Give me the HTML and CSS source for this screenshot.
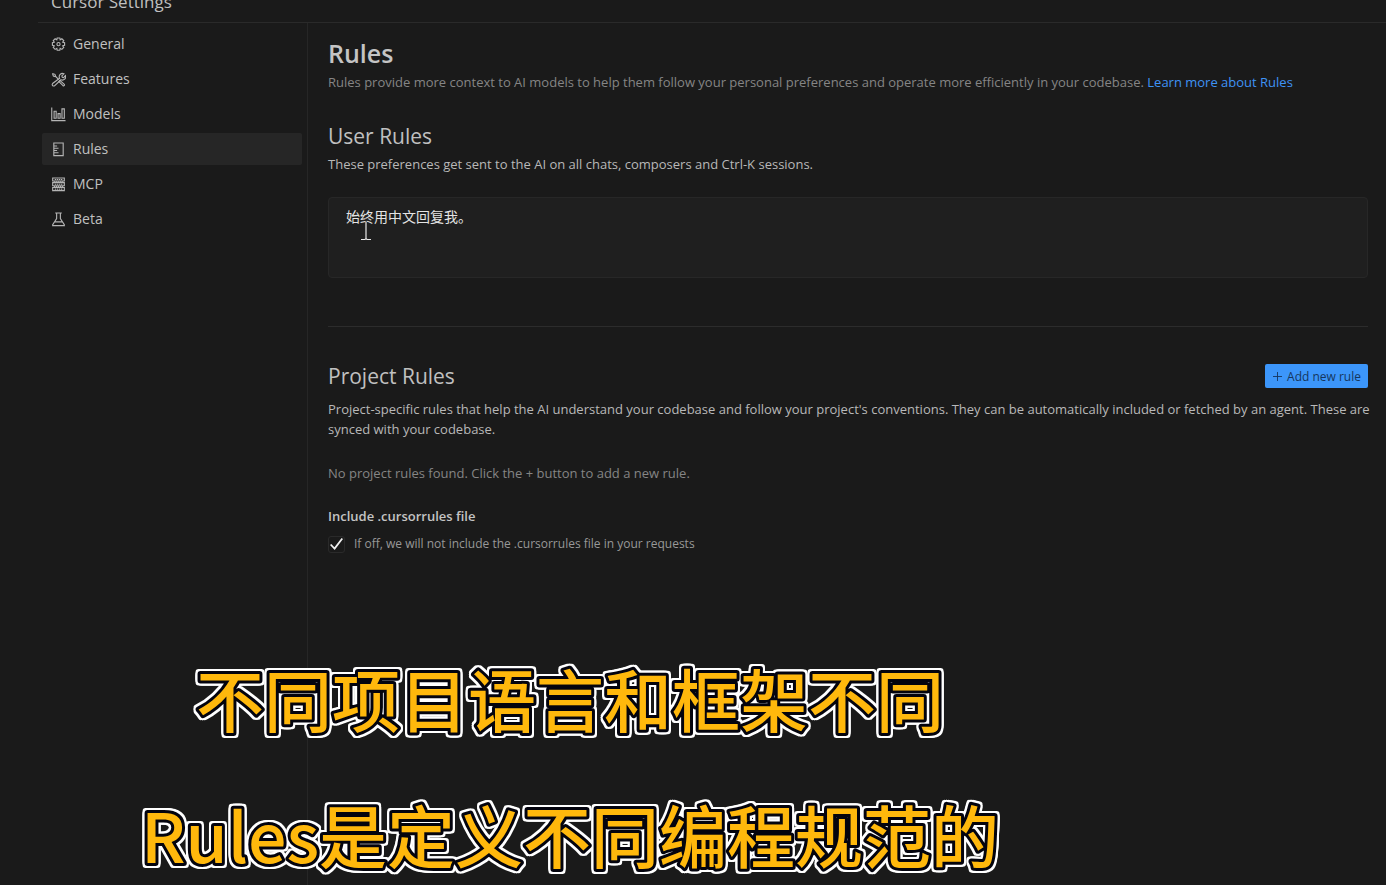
FILE: index.html
```html
<!DOCTYPE html>
<html lang="zh-CN">
<head>
    <meta charset="UTF-8">
    <meta name="viewport" content="width=device-width, initial-scale=1.0">
    <title>Cursor Settings</title>
    <link rel="stylesheet" href="styles.css">
</head>
<body>
    <div class="window">
        <header class="window-header">Cursor Settings</header>

        <div class="layout">
            <!-- 侧边导航 -->
            <nav class="sidebar">
                <a class="nav-item" href="#general">
                    <svg class="icon" viewBox="0 0 16 16">
                        <path d="M6.600 1h2.800l.4 2 1.800-1.100 2 2-1.100 1.700 2 .5v2.800l-2 .5 1.100 1.800-2 2-1.800-1.100-.4 2H6.600l-.4-2-1.800 1.100-2-2 1.100-1.800-2-.5V6.100l2-.5-1.100-1.700 2-2L6.200 3z"/>
                        <circle cx="8" cy="7.600" r="1.700"/>
                    </svg>
                    General
                </a>
                <a class="nav-item" href="#features">
                    <svg class="icon" viewBox="0 0 16 16">
                        <path d="M1.500 1.500l2.700 1 .8 2.300 3 3M1.500 1.500l1 2.700 2.300.8M9.500 9l4.700 4.200a1 1 0 0 1-1.400 1.400L8.400 10.200z"/>
                        <path d="M9.200 6.700a3.500 3.500 0 0 1 4.600-4.800l-2.200 2.200.4 1.500 1.500.4 1.900-2.200a3.500 3.500 0 0 1-4.700 4.500L4 14.500a1.500 1.500 0 0 1-2.300-2.200z"/>
                    </svg>
                    Features
                </a>
                <a class="nav-item" href="#models">
                    <svg class="icon" viewBox="0 0 16 16">
                        <path d="M.8.5v14h14.700M3.300 4.500h2.200V12H3.300zM7.500 7h2.200v5H7.500zM11.700 2h2.500v10h-2.500z"/>
                    </svg>
                    Models
                </a>
                <a class="nav-item active" href="#rules">
                    <svg class="icon" viewBox="0 0 16 16">
                        <path d="M3 1h10v13.500H3zM3 4.300h3.500M3 6.600h5M3 9h3.500M3 11.400h5"/>
                    </svg>
                    Rules
                </a>
                <a class="nav-item" href="#mcp">
                    <svg class="icon" viewBox="0 0 16 16">
                        <path d="M1.800 1h12.400v3.300H1.800zM1.800 6h12.400v3.300H1.800zM1.800 11.200h12.400v3.300H1.800z"/>
                        <path d="M4 2.700h8.500M4 7.700h8.500M4 12.900h8.500M3 5.200h10M3 10.300h10" stroke-dasharray="1.500 .7"/>
                    </svg>
                    MCP
                </a>
                <a class="nav-item" href="#beta">
                    <svg class="icon" viewBox="0 0 16 16">
                        <path d="M4.500 1h7M6 1v6l-4.200 6.500v1h12.400v-1L10 7V1M4 10.500h8"/>
                    </svg>
                    Beta
                </a>
            </nav>

            <main class="content">
                <h1>Rules</h1>
                <p class="text muted">Rules provide more context to AI models to help them follow your personal preferences and operate more efficiently in your codebase. <a class="link" href="#learn">Learn more about Rules</a></p>

                <section class="user-rules">
                    <h2><label for="userRules">User Rules</label></h2>
                    <p class="text">These preferences get sent to the AI on all chats, composers and Ctrl-K sessions.</p>
                    <textarea id="userRules" class="rules-input" spellcheck="false">始终用中文回复我。</textarea>
                </section>

                <section class="project-rules">
                    <div class="section-head">
                        <h2>Project Rules</h2>
                        <button class="add-button" type="button">
                            <svg class="plus" viewBox="0 0 10 10"><path d="M5 0v10M0 5h10"/></svg>
                            Add new rule
                        </button>
                    </div>
                    <p class="text">Project-specific rules that help the AI understand your codebase and follow your project's conventions. They can be automatically included or fetched by an agent. These are synced with your codebase.</p>
                    <p class="text muted empty">No project rules found. Click the + button to add a new rule.</p>

                    <h3>Include .cursorrules file</h3>
                    <div class="check-row">
                        <input type="checkbox" id="includeFile" checked>
                        <label for="includeFile">If off, we will not include the .cursorrules file in your requests</label>
                    </div>
                </section>
            </main>
        </div>

        <!-- 鼠标光标 -->
        <svg class="cursor" viewBox="0 0 12 20">
            <path d="M6 1v17M1 18.500h4l1-1 1 1h4"/>
        </svg>

        <!-- 字幕 -->
        <div class="caption">
            <svg class="caption-text">
                <text x="50%" y="76">不同项目语言和框架不同</text>
                <text x="50%" y="212">Rules是定义不同编程规范的</text>
            </svg>
        </div>
    </div>
</body>
</html>
```

FILE: styles.css
```css
* {
    box-sizing: border-box;
}

body {
    margin: 0;
    background-color: #1a1a1a;
    color: #b8b8b8;
    font-family: "Open Sans", "Noto Sans CJK SC", sans-serif;
    font-size: 13px;
    line-height: 20px;
}

h1, h2, h3, p {
    margin: 0;
}

.window {
    position: relative;
    display: flex;
    flex-direction: column;
    min-height: 100vh;
    padding-left: 38px;
    overflow: hidden;
}

.window-header {
    display: flex;
    align-items: flex-end;
    height: 23px;
    padding: 0 13px 8px;
    border-bottom: 1px solid #2a2a2a;
    font-size: 17px;
    line-height: 24px;
    color: #c0c0c0;
}

.layout {
    display: flex;
    flex: 1;
}

/* 侧边导航 */
.sidebar {
    display: flex;
    flex-direction: column;
    gap: 3px;
    flex: 0 0 270px;
    padding: 5px 5px 0 4px;
    border-right: 1px solid #262626;
}

.nav-item {
    display: flex;
    align-items: center;
    gap: 7px;
    height: 32px;
    padding: 0 9px;
    border-radius: 2px;
    color: #c0c0c0;
    font-size: 14px;
    text-decoration: none;
}

.nav-item.active {
    background-color: #262626;
}

.icon {
    width: 15px;
    height: 15px;
    fill: none;
    stroke: #b4b4b4;
    stroke-width: 1.2;
}

/* 右侧内容 */
.content {
    flex: 1;
    min-width: 0;
    padding: 13px 18px 0 20px;
}

h1 {
    margin-bottom: 2px;
    font-size: 25px;
    line-height: 34px;
    font-weight: 600;
    color: #c4c4c4;
}

h2 {
    font-size: 21px;
    line-height: 30px;
    font-weight: 400;
    color: #c0c0c0;
}

h3 {
    margin-top: 23px;
    font-size: 13px;
    line-height: 20px;
    font-weight: 600;
    color: #c4c4c4;
}

.text {
    margin-right: -10px;
}

.muted {
    color: #858585;
}

.link {
    color: #3f93f5;
    text-decoration: none;
}

.user-rules {
    padding: 29px 0 48px;
    border-bottom: 1px solid #2c2c2c;
}

.user-rules .text {
    margin-top: 3px;
}

.rules-input {
    display: block;
    width: 100%;
    height: 81px;
    margin-top: 23px;
    padding: 9px 17px;
    border: 1px solid #272727;
    border-radius: 4px;
    outline: none;
    resize: none;
    background-color: #1f1f1f;
    color: #e4e4e4;
    font-family: inherit;
    font-size: 14px;
    line-height: 20px;
}

.project-rules {
    padding-top: 34px;
}

.section-head {
    display: flex;
    align-items: center;
    justify-content: space-between;
    margin-bottom: 8px;
}

.add-button {
    display: flex;
    align-items: center;
    gap: 5px;
    height: 24px;
    padding: 0 7px 0 8px;
    border: none;
    border-radius: 2px;
    background-color: #3c96fa;
    color: #15365e;
    font-family: inherit;
    font-size: 12px;
}

.plus {
    width: 9px;
    height: 9px;
    fill: none;
    stroke: currentColor;
    stroke-width: 1;
}

.empty {
    margin-top: 24px;
}

.check-row {
    display: flex;
    align-items: center;
    gap: 9px;
    margin-top: 8px;
    color: #989898;
    font-size: 12px;
}

.check-row input {
    appearance: none;
    display: grid;
    place-items: center;
    width: 17px;
    height: 17px;
    margin: 0;
    border: 1px solid #2a2a2a;
    border-radius: 3px;
}

.check-row input:checked::before {
    content: "";
    width: 13px;
    height: 12px;
    background-color: #f0f0f0;
    clip-path: polygon(0 58%, 10% 49%, 34% 78%, 89% 0, 100% 8%, 36% 100%);
}

.cursor {
    position: absolute;
    top: 221px;
    left: 360px;
    width: 12px;
    height: 20px;
    fill: none;
    stroke: #e8e8e8;
    stroke-width: 1.2;
    pointer-events: none;
}

/* 字幕：黄字、黑描边、白色外轮廓 */
.caption {
    position: absolute;
    left: 0;
    right: 246px;
    bottom: 0;
    pointer-events: none;
}

.caption-text {
    display: block;
    width: 100%;
    height: 234px;
    overflow: visible;
    font-family: "Noto Sans CJK SC", sans-serif;
    font-size: 68px;
    font-weight: 500;
    text-anchor: middle;
    fill: #ffb80c;
    stroke: #04040e;
    stroke-width: 6px;
    stroke-linejoin: round;
    paint-order: stroke fill;
    filter: drop-shadow(2px 0 #fff) drop-shadow(-2px 0 #fff) drop-shadow(0 2px #fff) drop-shadow(0 -2px #fff);
}
```
